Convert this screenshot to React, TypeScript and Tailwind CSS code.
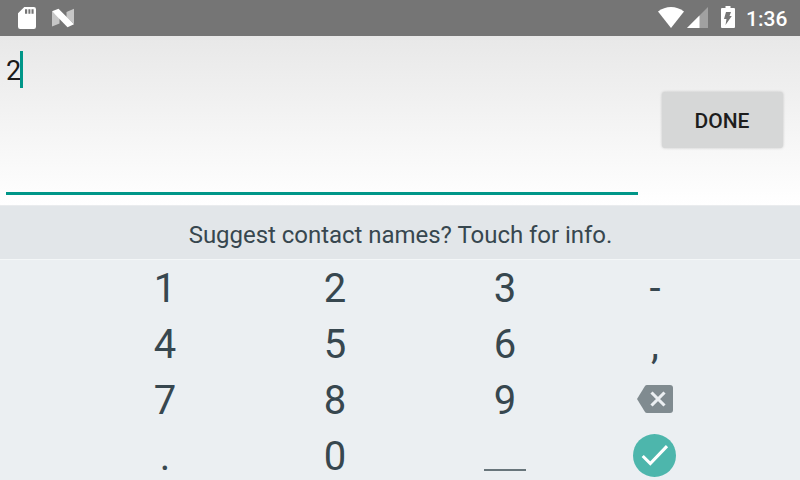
import React from 'react';

function StatusBar() {
  return (
    <header className="flex h-9 shrink-0 items-center justify-between bg-[#757575] pr-3 pl-[18px] text-white">
      <div className="flex items-center gap-4">
        <svg className="h-[22px] w-[18px]" viewBox="0 0 18 22">
          <path
            fill="#fff"
            fillRule="evenodd"
            d="M6.3 0H15.8Q18 0 18 2.2V19.8Q18 22 15.8 22H2.2Q0 22 0 19.8V6.3ZM7 2.2V6.8H9.2V2.2ZM10.4 2.2V6.8H12.4V2.2ZM13.5 2.2V6.8H15.6V2.2Z"
          />
        </svg>
        <svg className="h-[20px] w-[22px]" viewBox="0 0 22 20">
          <path fill="#c6c6c6" d="M0 3.500L7.500 9V15.500L0 18.500ZM22 0.800V16L14.500 9V4Z" />
          <path fill="#fff" d="M0 3.300L6.500 0.800L22 16.200L15.500 19.200Z" />
        </svg>
      </div>
      <div className="flex items-center">
        <svg className="mb-px h-[21px] w-[26px]" viewBox="0 0 26 21">
          <path fill="#fff" d="M0 4.6C7.5-1.5 18.5-1.5 26 4.6L13 21Z" />
        </svg>
        <svg className="mb-px ml-[3px] h-[21px] w-[21px]" viewBox="0 0 21 21">
          <path fill="#a1a1a1" d="M21 0V21H0Z" />
          <path fill="#fff" d="M12.500 8.500V21H0Z" />
        </svg>
        <svg className="mb-[2px] ml-[13px] h-[22px] w-[14px]" viewBox="0 0 14 22">
          <path
            fill="#fff"
            d="M4.5 0H9.5V2H13Q14 2 14 3V21Q14 22 13 22H1Q0 22 0 21V3Q0 2 1 2H4.5Z"
          />
          <path fill="#757575" d="M5 6H10L8.500 10H10.800L4.500 19L5.500 13H3Z" />
        </svg>
        <span className="ml-[11px] w-[42px] pt-[2px] text-[21px] leading-6 font-medium">1:36</span>
      </div>
    </header>
  );
}

function Editor() {
  return (
    <section className="flex h-[169px] shrink-0 bg-linear-to-b from-[#e8e8e8] to-white">
      <div className="ml-1.5 flex h-[159px] w-[632px] items-start border-b-[3px] border-[#009688] pt-[15px]">
        <span className="w-[14px] text-[27px] leading-[40px] text-[#1b1b1b]">2</span>
        <span className="h-[37px] w-[3px] bg-[#009688]" />
      </div>
      <button className="mt-14 ml-6 h-14 w-[121px] rounded-[3px] bg-[#d6d7d7] pt-[3px] pr-px text-[21px] font-medium text-[#1d1d1d] shadow-[0_0_3px_rgba(0,0,0,0.2)]">
        DONE
      </button>
    </section>
  );
}

function Backspace() {
  return (
    <svg className="mb-[2px] h-7 w-9" viewBox="0 0 36 28">
      <path fill="#808b90" d="M10 0H33Q36 0 36 3V25Q36 28 33 28H10Q8.7 28 8 27L0 14L8 1Q8.700 0 10 0Z" />
      <path stroke="#ebeff2" strokeWidth="3.1" d="M14.500 7.500L27.500 20.500M27.500 7.500L14.500 20.500" />
    </svg>
  );
}

function Confirm() {
  return (
    <svg className="mr-px mb-px h-[43px] w-[43px]" viewBox="0 0 43 43">
      <circle cx="21.500" cy="21.500" r="21.500" fill="#4db6ac" />
      <path fill="none" stroke="#fff" strokeWidth="3.100" d="M9.700 22L17.300 29.500L34 12.200" />
    </svg>
  );
}

const keys: React.ReactNode[] = [
  '1', '2', '3', '-',
  '4', '5', '6', ',',
  '7', '8', '9', <Backspace />,
  '.', '0', <span className="mt-[28px] h-[2px] w-[42px] bg-[#68757b]" />, <Confirm />,
];

function Keyboard() {
  return (
    <section className="flex grow flex-col bg-[#ebeff2] text-[#37474f]">
      <div className="flex h-[55px] shrink-0 items-center justify-center border-t border-b border-t-[#eaecee] border-b-[#f4f7f8] bg-[#e2e6e9] pt-[5px] pl-px text-2xl tracking-[-0.03px]">
        Suggest contact names? Touch for info.
      </div>
      <div className="grid grid-cols-[170px_170px_170px_130px] grid-rows-[repeat(4,56px)] pl-20 text-[40px] leading-[56px]">
        {keys.map((key, i) => (
          <div key={i} className="flex items-center justify-center">
            {typeof key === 'string' ? <span className="pt-[2px]">{key}</span> : key}
          </div>
        ))}
      </div>
    </section>
  );
}

export default function App() {
  return (
    <main className="flex h-[480px] w-[800px] flex-col overflow-hidden font-[Roboto,sans-serif]">
      <StatusBar />
      <Editor />
      <Keyboard />
    </main>
  );
}
